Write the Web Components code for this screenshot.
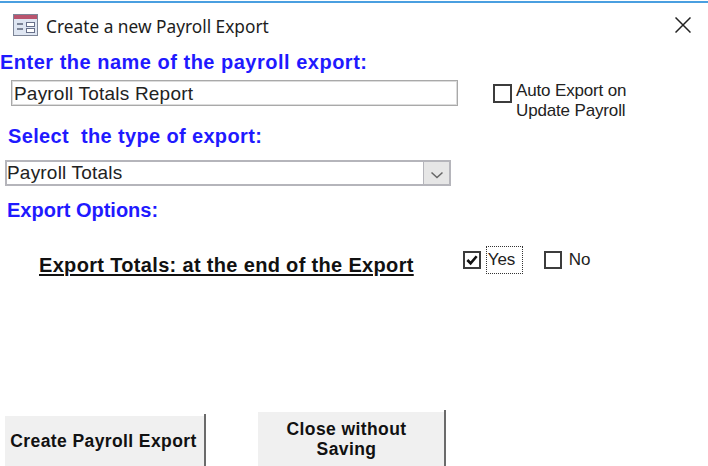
<!DOCTYPE html>
<html>
<head>
<meta charset="utf-8">
<title>Create a new Payroll Export</title>
<style>
  html, body { margin: 0; padding: 0; background: #fff; }
</style>
</head>
<body>
<export-window>
  <span slot="title">Create a new Payroll Export</span>

  <form-heading indent="0" top="3" spacing="0.5">Enter the name of the payroll export:</form-heading>

  <div style="display:flex; align-items:flex-start; margin-top:6px;">
    <text-field value="Payroll Totals Report"></text-field>
    <check-option style="margin-left:35px; margin-top:1px; --box-top:3px; --box-size:15px; --label-gap:4px;">Auto Export on<br>Update Payroll</check-option>
  </div>

  <form-heading indent="8" top="3" spacing="0.36">Select&nbsp; the type of export:</form-heading>
  <combo-field value="Payroll Totals"></combo-field>
  <form-heading indent="7" top="12" spacing="0">Export Options:</form-heading>

  <div style="display:flex; align-items:flex-start; margin-top:31px;">
    <option-label>Export Totals: at the end of the Export</option-label>
    <check-option style="margin-left:49px; margin-top:-2px; --box-top:0px;" checked focused>Yes</check-option>
    <check-option style="margin-left:21px; margin-top:-3px; --box-top:1px;">No</check-option>
  </div>

  <div slot="actions" style="display:flex; align-items:flex-end; padding-left:5px;">
    <action-button style="width:201px; height:50px; padding-right:4px;">Create Payroll Export</action-button>
    <action-button style="width:188px; height:54px; margin-left:52px; padding-right:11px;">Close without<br>Saving</action-button>
  </div>
</export-window>

<script>
class ExportWindow extends HTMLElement {
  constructor() {
    super();
    this.attachShadow({ mode: "open" });
    this.shadowRoot.innerHTML = `
      <style>
        :host {
          display: flex;
          flex-direction: column;
          width: 708px;
          height: 466px;
          box-sizing: border-box;
          padding-top: 1px;
          background: #fff;
          overflow: hidden;
        }
        .frame {
          flex: 1;
          display: flex;
          flex-direction: column;
          border-top: 2px solid #4a9fe0;
          min-height: 0;
        }
        .bar {
          display: flex;
          align-items: center;
          height: 44px;
          padding: 0 17px 0 13px;
          flex: none;
        }
        .bar svg.app { width: 25px; height: 24px; flex: none; }
        .bar .title {
          margin-left: 8px;
          padding-top: 3px;
          flex: 1;
          font: 17.3px "Noto Sans", "Open Sans", sans-serif;
          color: #1d1d1d;
        }
        .bar svg.close { width: 16px; height: 16px; flex: none; }
        .body { flex: 1; min-height: 0; }
        .actions { flex: none; }
      </style>
      <div class="frame">
        <div class="bar">
          <svg class="app" viewBox="0 0 25 24">
            <rect x="0.5" y="1.5" width="24" height="21" fill="#dfe6f2" stroke="#7d8597"/>
            <rect x="1" y="2" width="23" height="4" fill="#b9546e"/>
            <path d="M4 11h6M4 16h6" stroke="#5c6478" stroke-width="1.4"/>
            <rect x="13.5" y="9.5" width="8" height="4" fill="#fff" stroke="#68708a"/>
            <rect x="13.5" y="15.5" width="8" height="4" fill="#fff" stroke="#68708a"/>
          </svg>
          <span class="title"><slot name="title"></slot></span>
          <svg class="close" viewBox="0 0 16 16">
            <path d="M0.5 0.5L15.5 15.5M15.5 0.5L0.5 15.5" stroke="#222" stroke-width="1.5" fill="none"/>
          </svg>
        </div>
        <div class="body"><slot></slot></div>
        <div class="actions"><slot name="actions"></slot></div>
      </div>
    `;
  }
}

class FormHeading extends HTMLElement {
  constructor() {
    super();
    this.attachShadow({ mode: "open" });
    this.shadowRoot.innerHTML = `
      <style>
        :host {
          display: block;
          font: bold 20px/24px "Liberation Sans", Arial, sans-serif;
          color: #1f1aff;
          white-space: nowrap;
        }
      </style>
      <slot></slot>
    `;
  }

  connectedCallback() {
    this.style.paddingLeft = (this.getAttribute("indent") || 0) + "px";
    this.style.marginTop = (this.getAttribute("top") || 0) + "px";
    this.style.letterSpacing = (this.getAttribute("spacing") || 0) + "px";
  }
}

class TextField extends HTMLElement {
  constructor() {
    super();
    this.attachShadow({ mode: "open" });
    this.shadowRoot.innerHTML = `
      <style>
        :host {
          display: block;
          flex: none;
          width: 447px;
          height: 26px;
          margin-left: 11px;
          box-sizing: border-box;
          border: 1px solid #a9a9a9;
          outline: 1px solid #dcdcdc;
          outline-offset: -2px;
          padding-left: 2px;
          font: 19px/26px "Liberation Sans", Arial, sans-serif;
          letter-spacing: 0.2px;
          color: #222;
          white-space: nowrap;
        }
      </style>
      <span id="value"></span>
    `;
  }

  connectedCallback() {
    this.shadowRoot.getElementById("value").textContent = this.getAttribute("value");
  }
}

class ComboField extends HTMLElement {
  constructor() {
    super();
    this.attachShadow({ mode: "open" });
    this.shadowRoot.innerHTML = `
      <style>
        :host {
          display: flex;
          width: 446px;
          height: 26px;
          margin: 12px 0 0 5px;
          box-sizing: border-box;
          border: 2px solid #b5b5bb;
          font: 19px/22px "Liberation Sans", Arial, sans-serif;
          letter-spacing: 0.2px;
          color: #222;
        }
        .text { flex: 1; white-space: nowrap; }
        .arrow {
          width: 25px;
          background: #e6e6e6;
          border-left: 1px solid #b5b5bb;
          display: flex;
          align-items: center;
          justify-content: center;
        }
        svg { width: 14px; height: 8px; margin-top: 4px; }
      </style>
      <span class="text" id="value"></span>
      <span class="arrow">
        <svg viewBox="0 0 14 8"><path d="M1.5 1.5L7 6.5L12.5 1.5" stroke="#666" stroke-width="1.5" fill="none"/></svg>
      </span>
    `;
  }

  connectedCallback() {
    this.shadowRoot.getElementById("value").textContent = this.getAttribute("value");
  }
}

class OptionLabel extends HTMLElement {
  constructor() {
    super();
    this.attachShadow({ mode: "open" });
    this.shadowRoot.innerHTML = `
      <style>
        :host {
          display: block;
          flex: none;
          margin-left: 39px;
          font: bold 20px/24px "Liberation Sans", Arial, sans-serif;
          letter-spacing: 0.33px;
          color: #111;
          text-decoration: underline;
          text-decoration-thickness: 2px;
          text-underline-offset: 2px;
          white-space: nowrap;
        }
      </style>
      <slot></slot>
    `;
  }
}

class CheckOption extends HTMLElement {
  constructor() {
    super();
    this.attachShadow({ mode: "open" });
    this.shadowRoot.innerHTML = `
      <style>
        :host {
          display: flex;
          align-items: flex-start;
          flex: none;
          font: 17px/20px "Liberation Sans", Arial, sans-serif;
          letter-spacing: -0.15px;
          color: #222;
          white-space: nowrap;
        }
        .box {
          width: var(--box-size, 14px);
          height: var(--box-size, 14px);
          flex: none;
          border: 2px solid #3c3c3c;
          margin-top: var(--box-top, 0);
          display: flex;
        }
        svg { width: 100%; height: 100%; visibility: hidden; }
        :host([checked]) svg { visibility: visible; }
        .label { margin-left: var(--label-gap, 7px); }
        :host([focused]) .label {
          margin-left: 5px;
          width: 37px;
          height: 28px;
          padding-left: 2px;
          margin-top: -5px;
          line-height: 27px;
          box-sizing: border-box;
          outline: 1px dotted #333;
          outline-offset: -1px;
        }
      </style>
      <span class="box">
        <svg viewBox="0 0 15 15"><path d="M2.5 7.5L6 11L12.5 3.5" stroke="#111" stroke-width="2.8" fill="none"/></svg>
      </span>
      <span class="label"><slot></slot></span>
    `;
  }
}

class ActionButton extends HTMLElement {
  constructor() {
    super();
    this.attachShadow({ mode: "open" });
    this.shadowRoot.innerHTML = `
      <style>
        :host {
          display: flex;
          position: relative;
          align-items: center;
          justify-content: center;
          flex: none;
          box-sizing: border-box;
          background: #f0f0f0;
          padding-right: 2px;
          font: bold 17.5px/20px "Liberation Sans", Arial, sans-serif;
          letter-spacing: 0.4px;
          color: #111;
          text-align: center;
        }
        /* the right edge line pokes a little above the face */
        :host::after {
          content: "";
          position: absolute;
          top: -2px;
          right: 0;
          bottom: 0;
          width: 2px;
          background: #6b6b6b;
        }
      </style>
      <span><slot></slot></span>
    `;
  }
}

customElements.define("export-window", ExportWindow);
customElements.define("form-heading", FormHeading);
customElements.define("text-field", TextField);
customElements.define("combo-field", ComboField);
customElements.define("option-label", OptionLabel);
customElements.define("check-option", CheckOption);
customElements.define("action-button", ActionButton);
</script>
</body>
</html>
